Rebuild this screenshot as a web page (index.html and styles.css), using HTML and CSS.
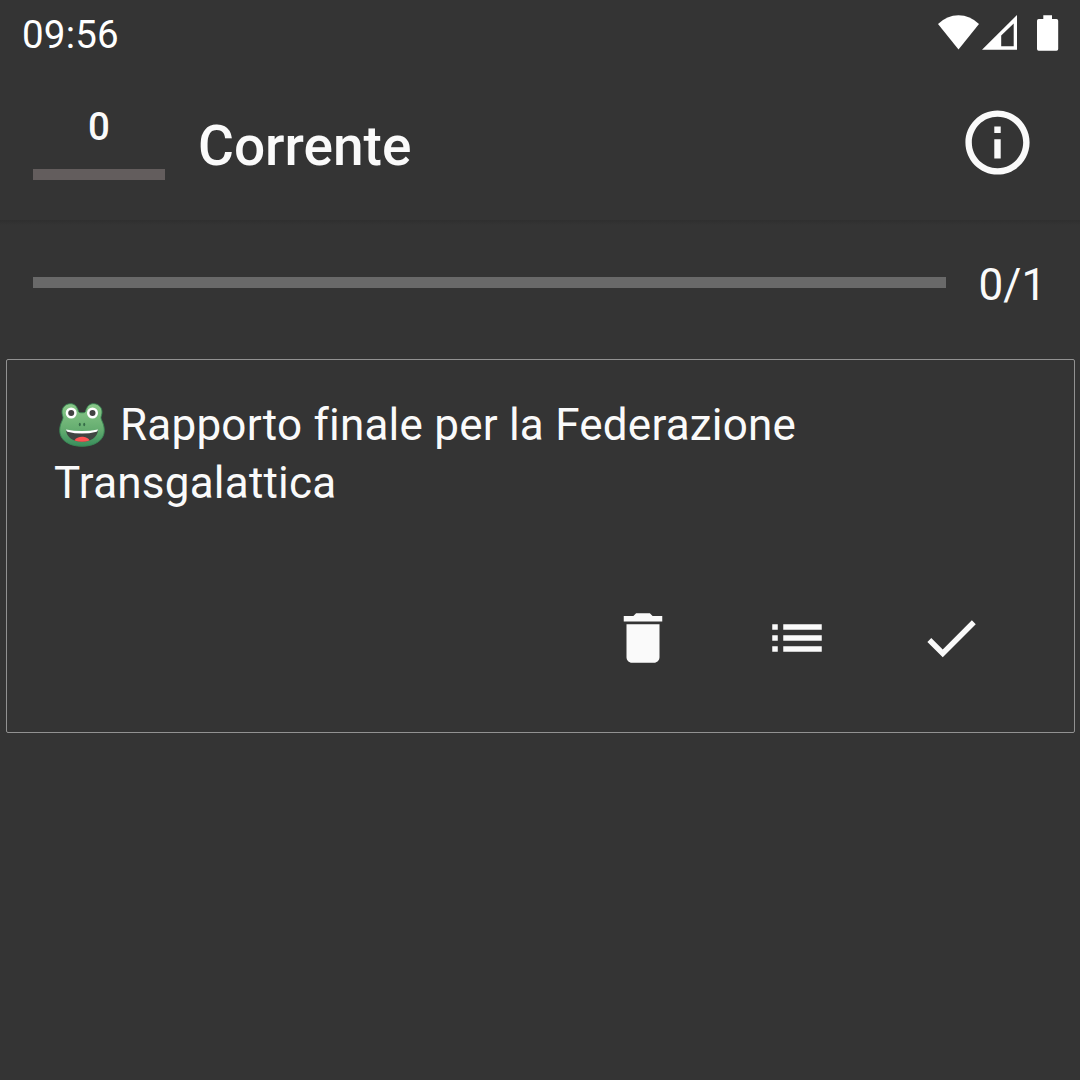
FILE: index.html
```html
<!DOCTYPE html>
<html lang="it">
<head>
<meta charset="utf-8">
<title>Corrente</title>
<link rel="stylesheet" href="styles.css">
</head>
<body>
<div class="status">
  <span class="clock">09:56</span>
  <svg class="status-icons" width="124" height="40" viewBox="936 13 124 40">
    <path fill="#fff" d="M938 24Q947 15.2 958.5 15.2T979 24L958.5 49.4Z"/>
    <path fill="#fff" fill-rule="evenodd" d="M982 49.8L1017 15V49.8ZM1001.2 35.6V46.2H1013.7V23.6Z"/>
    <path fill="#fff" d="M1043.3 15.300H1052V19H1056.500Q1058.200 19 1058.200 20.700V49Q1058.200 50.800 1056.500 50.800H1038.700Q1037 50.800 1037 49V20.700Q1037 19 1038.700 19H1043.300Z"/>
  </svg>
</div>
<header class="appbar">
  <div class="counter">
    <span class="count">0</span>
    <div class="count-bar"></div>
  </div>
  <h1 class="title">Corrente</h1>
  <svg class="info" viewBox="0 0 24 24" fill="#fafafa"><path d="M11 7h2v2h-2zm0 4h2v6h-2zm1-9C6.480 2 2 6.480 2 12s4.480 10 10 10 10-4.480 10-10S17.520 2 12 2zm0 18c-4.410 0-8-3.590-8-8s3.590-8 8-8 8 3.590 8 8-3.590 8-8 8z"/></svg>
</header>
<main class="content">
  <div class="progress">
    <div class="track"></div>
    <span class="ratio">0/1</span>
  </div>
  <section class="card">
    <p class="task"><svg class="frog" viewBox="0 0 46 44">
      <defs><linearGradient id="skin" x1="0" y1="0" x2="0" y2="1"><stop offset="0" stop-color="#8bc98a"/><stop offset=".6" stop-color="#65ad70"/><stop offset="1" stop-color="#388d5c"/></linearGradient></defs>
      <path fill="url(#skin)" stroke="#398654" stroke-width=".9" d="M23 9.800C25 9.800 26 9.600 26.500 8.500C28 2.800 30.800.7 34.500.7C39.500.7 43 4.500 43 9C43 11.500 42.100 13 42 14.500C42 17.500 45.300 20.500 45.300 27.500C45.300 37.500 35.500 43.300 23 43.300S.7 37.500.7 27.500C.7 20.500 4 17.500 4 14.500C3.900 13 3 11.500 3 9C3 4.500 6.500.7 11.500.7C15.200.7 18 2.800 19.500 8.500C20 9.600 21 9.800 23 9.800Z"/>
      <circle cx="12.200" cy="10" r="5.500" fill="#fff"/><circle cx="33.500" cy="10" r="5.500" fill="#fff"/>
      <circle cx="12.200" cy="10" r="3" fill="#424242"/><circle cx="33.500" cy="10" r="3" fill="#424242"/>
      <ellipse cx="20.800" cy="21.500" rx="1" ry="1.800" fill="#356b48"/><ellipse cx="25.200" cy="21.500" rx="1" ry="1.800" fill="#356b48"/>
      <path fill="#404542" d="M7 27Q23 30.500 39 27C38.500 34.500 31.500 38.800 23 38.800S7.500 34.500 7 27Z"/>
      <path fill="#ff5252" d="M15.500 37.500C16.500 35 20 33.800 23 33.800S29.500 35 30.500 37.500Q23 40 15.500 37.500Z"/>
      <path fill="#fff" d="M7 26.500Q23 29.500 39 26.500Q38.600 28.200 37.500 28.700Q23 32.400 8.500 28.700Q7.400 28.200 7 26.500Z"/>
    </svg>Rapporto finale per la Federazione Transgalattica</p>
    <div class="actions">
      <svg class="action" viewBox="0 0 24 24"><path d="M6 19c0 1.100.9 2 2 2h8c1.100 0 2-.9 2-2V7H6zM19 4h-3.500l-1-1h-5l-1 1H5v2h14z"/></svg>
      <svg class="action" viewBox="0 0 24 24"><path d="M3 13h2v-2H3zm0 4h2v-2H3zm0-8h2V7H3zm4 4h14v-2H7zm0 4h14v-2H7zM7 7v2h14V7z"/></svg>
      <svg class="action" viewBox="0 0 24 24"><path d="M9 16.170L4.830 12l-1.420 1.410L9 19 21 7l-1.410-1.410z"/></svg>
    </div>
  </section>
</main>
</body>
</html>
```
FILE: styles.css
```css
* { box-sizing: border-box; }
body {
  margin: 0;
  height: 1080px;
  overflow: hidden;
  background: #343434;
  color: #fafafa;
  font-family: Roboto, sans-serif;
}
svg { display: block; flex: none; }
.status {
  height: 66px;
  padding: 13px 20px 0 22px;
  display: flex;
  justify-content: space-between;
  color: #fff;
}
.clock { font-size: 38.5px; line-height: 44px; letter-spacing: .2px; }
.appbar {
  height: 154px;
  padding: 0 44px 0 33px;
  display: flex;
  align-items: flex-start;
}
.counter {
  width: 132px;
  padding-top: 38px;
  text-align: center;
}
.count {
  display: block;
  font-size: 38.5px;
  font-weight: 500;
  line-height: 45px;
}
.count-bar { height: 11px; margin-top: 20px; background: #635d5d; }
.title {
  flex: 1;
  margin: 48px 0 0 33px;
  font-size: 55px;
  font-weight: 500;
  line-height: 64px;
}
.info { width: 77px; height: 77px; margin-top: 38px; }
.content {
  padding: 31px 5px 0 6px;
  background: linear-gradient(rgba(0, 0, 0, .1), transparent 5px);
}
.progress {
  height: 66px;
  margin: 0 29px 0 27px;
  display: flex;
  align-items: center;
}
.track { flex: none; width: 913px; height: 11px; margin-top: -3px; background: #696969; }
.ratio { margin: 2px 0 0 32.5px; font-size: 44px; line-height: 52px; white-space: nowrap; }
.card {
  height: 374px;
  margin-top: 42px;
  padding: 36px 90px 0 47px;
  border: 1px solid #929292;
  border-radius: 2px;
}
.task {
  margin: 0;
  font-size: 44px;
  line-height: 58px;
  letter-spacing: .22px;
}
.frog {
  display: inline-block;
  width: 46px;
  height: 44px;
  margin: 0 15.5px 0 4.5px;
  vertical-align: -7px;
}
.actions {
  margin-top: 93px;
  display: flex;
  justify-content: flex-end;
  gap: 88px;
}
.action { width: 66px; height: 66px; fill: #fafafa; }
```
